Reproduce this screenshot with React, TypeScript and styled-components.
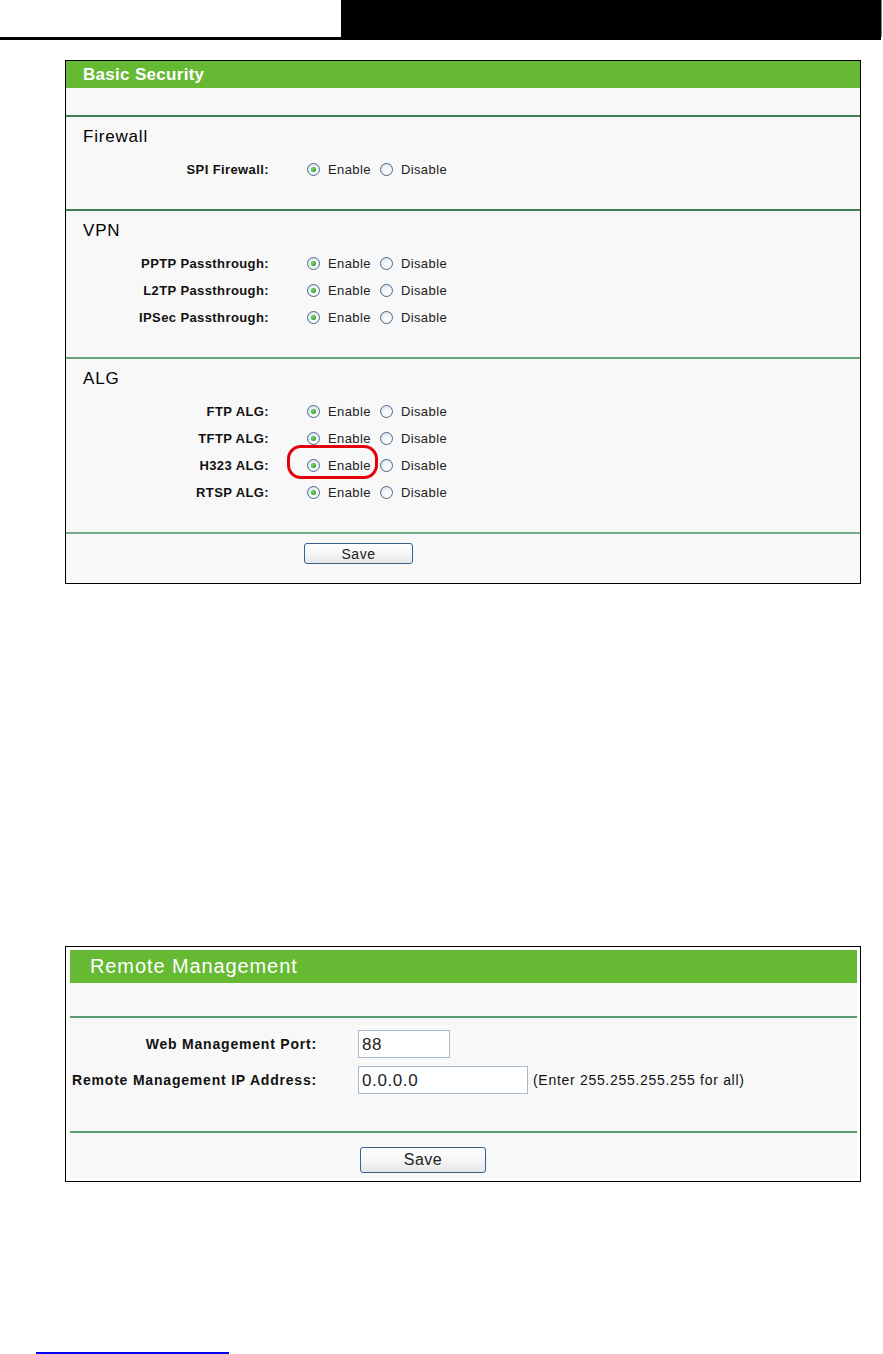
import React from "react";
import styled, { createGlobalStyle } from "styled-components";

const GlobalStyle = createGlobalStyle`
  html, body { margin: 0; padding: 0; background: #ffffff; }
  body { font-family: "Liberation Sans", Arial, sans-serif; color: #000; }
  * { box-sizing: border-box; }
`;

const Page = styled.div`
  width: 883px;
  height: 1354px;
  overflow: hidden;
  display: flex;
  flex-direction: column;
`;

const TopBar = styled.header`
  display: flex;
  height: 40px;
  flex: none;
`;

const TopLeft = styled.div`
  width: 341px;
  height: 40px;
  border-bottom: 3px solid #000;
  background: #fff;
`;

const TopRight = styled.div`
  width: 540px;
  height: 40px;
  background: #000;
`;

const TopEdge = styled.div`
  width: 1px;
  height: 37px;
  background: #8a8a8a;
`;

const Panel = styled.section<{ $top: number; $pad?: string }>`
  margin-top: ${(p) => p.$top}px;
  margin-left: 65px;
  width: 796px;
  border: 1px solid #000;
  background: #fff;
  padding: ${(p) => p.$pad ?? "0"};
  flex: none;
`;

const TitleBar = styled.div<{ $h: number; $size: number; $weight: number; $indent: number; $spacing: number }>`
  height: ${(p) => p.$h}px;
  line-height: ${(p) => p.$h}px;
  background: #66b933;
  color: #fff;
  font-size: ${(p) => p.$size}px;
  font-weight: ${(p) => p.$weight};
  letter-spacing: ${(p) => p.$spacing}px;
  padding-left: ${(p) => p.$indent}px;
  white-space: nowrap;
`;

const Body = styled.div`
  background: #f8f8f8;
`;

const Spacer = styled.div<{ $h: number }>`
  height: ${(p) => p.$h}px;
`;

const Divider = styled.div<{ $color: string }>`
  height: 2px;
  background: ${(p) => p.$color};
`;

const Section = styled.div`
  padding: 8px 0 26px 0;
`;

const SectionHeading = styled.h3`
  margin: 0 0 7px 0;
  padding-left: 17px;
  font-size: 17px;
  line-height: 24px;
  font-weight: normal;
  letter-spacing: 0.8px;
  color: #000;
`;

const OptionRow = styled.div`
  display: grid;
  grid-template-columns: 203px 1fr;
  column-gap: 38px;
  height: 27px;
  align-items: center;
`;

const RowLabel = styled.span`
  text-align: right;
  font-size: 13px;
  font-weight: bold;
  letter-spacing: 0.4px;
  color: #111;
  white-space: nowrap;
`;

const RadioGroup = styled.div`
  position: relative;
  display: flex;
  align-items: center;
  height: 27px;
`;

const Option = styled.label`
  display: flex;
  align-items: center;
  gap: 8px;
  margin-right: 9px;
  font-size: 13px;
  letter-spacing: 0.4px;
  color: #222;
  white-space: nowrap;
`;

const Radio = styled.span<{ $checked?: boolean }>`
  position: relative;
  flex: none;
  width: 13px;
  height: 13px;
  border-radius: 50%;
  border: 1px solid #46698a;
  background: radial-gradient(circle at 62% 68%, #ffffff 0%, #f3f4f6 45%, #cfd6de 100%);
  &::after {
    content: "";
    position: absolute;
    left: 3px;
    top: 3px;
    width: 5px;
    height: 5px;
    border-radius: 50%;
    background: radial-gradient(circle at 40% 40%, #7fdc6f 0%, #2c9a2e 70%);
    display: ${(p) => (p.$checked ? "block" : "none")};
  }
`;

const Highlight = styled.span`
  position: absolute;
  left: -20px;
  top: -7px;
  width: 91px;
  height: 34px;
  border: 3px solid #e3000b;
  border-radius: 14px;
  pointer-events: none;
`;

const Footer = styled.div<{ $pad: string; $indent: number }>`
  padding: ${(p) => p.$pad};
  padding-left: ${(p) => p.$indent}px;
  display: flex;
`;

const SaveButton = styled.button<{ $w: number; $h: number; $size: number }>`
  width: ${(p) => p.$w}px;
  height: ${(p) => p.$h}px;
  border: 1px solid #35618a;
  border-radius: 3px;
  background: linear-gradient(#ffffff 0%, #f6f6f6 50%, #e6e6e6 100%);
  font-family: "Liberation Sans", Arial, sans-serif;
  font-size: ${(p) => p.$size}px;
  letter-spacing: 0.5px;
  color: #222;
  padding: 0;
  cursor: pointer;
`;

const FieldList = styled.div`
  padding: 12px 0 37px 0;
  display: flex;
  flex-direction: column;
  gap: 8px;
`;

const FieldRow = styled.div`
  display: grid;
  grid-template-columns: 247px 1fr;
  column-gap: 41px;
  height: 28px;
  align-items: center;
`;

const FieldLabel = styled.span`
  text-align: right;
  font-size: 14px;
  font-weight: bold;
  letter-spacing: 0.8px;
  color: #111;
  white-space: nowrap;
`;

const FieldControls = styled.div`
  display: flex;
  align-items: center;
  gap: 5px;
`;

const TextInput = styled.input<{ $w: number }>`
  width: ${(p) => p.$w}px;
  height: 28px;
  border: 1px solid #a6bacd;
  background: #fff;
  padding: 2px 3px 0 3px;
  font-family: "Liberation Sans", Arial, sans-serif;
  font-size: 17px;
  letter-spacing: 0.6px;
  color: #222;
  outline: none;
`;

const Hint = styled.span`
  font-size: 14px;
  letter-spacing: 0.7px;
  color: #111;
  white-space: nowrap;
`;

const FootLink = styled.a`
  display: block;
  margin-top: 170px;
  margin-left: 36px;
  width: 193px;
  height: 2px;
  background: #0000ff;
  flex: none;
`;

type Setting = { label: string; highlight?: boolean };

const sections: { title: string; rows: Setting[] }[] = [
  { title: "Firewall", rows: [{ label: "SPI Firewall:" }] },
  {
    title: "VPN",
    rows: [
      { label: "PPTP Passthrough:" },
      { label: "L2TP Passthrough:" },
      { label: "IPSec Passthrough:" },
    ],
  },
  {
    title: "ALG",
    rows: [
      { label: "FTP ALG:" },
      { label: "TFTP ALG:" },
      { label: "H323 ALG:", highlight: true },
      { label: "RTSP ALG:" },
    ],
  },
];

function EnableRow({ label, highlight }: Setting) {
  return (
    <OptionRow>
      <RowLabel>{label}</RowLabel>
      <RadioGroup>
        <Option>
          <Radio $checked />
          Enable
        </Option>
        <Option>
          <Radio />
          Disable
        </Option>
        {highlight && <Highlight />}
      </RadioGroup>
    </OptionRow>
  );
}

export default function App() {
  return (
    <>
      <GlobalStyle />
      <Page>
        <TopBar>
          <TopLeft />
          <TopRight />
          <TopEdge />
        </TopBar>

        <Panel $top={20}>
          <TitleBar $h={27} $size={17} $weight={700} $indent={17} $spacing={0.3}>
            Basic Security
          </TitleBar>
          <Body>
            <Spacer $h={27} />
            {sections.map((s, i) => (
              <React.Fragment key={s.title}>
                <Divider $color={i < 2 ? "#3e7f55" : "#66a47c"} />
                <Section>
                  <SectionHeading>{s.title}</SectionHeading>
                  {s.rows.map((r) => (
                    <EnableRow key={r.label} {...r} />
                  ))}
                </Section>
              </React.Fragment>
            ))}
            <Divider $color="#72ac88" />
            <Footer $pad="9px 0 19px 0" $indent={238}>
              <SaveButton $w={109} $h={21} $size={14}>
                Save
              </SaveButton>
            </Footer>
          </Body>
        </Panel>

        <Panel $top={362} $pad="3px 3px 3px 4px">
          <TitleBar $h={33} $size={20} $weight={400} $indent={20} $spacing={0.9}>
            Remote Management
          </TitleBar>
          <Body>
            <Spacer $h={33} />
            <Divider $color="#5b9c70" />
            <FieldList>
              <FieldRow>
                <FieldLabel>Web Management Port:</FieldLabel>
                <FieldControls>
                  <TextInput $w={92} readOnly defaultValue="88" />
                </FieldControls>
              </FieldRow>
              <FieldRow>
                <FieldLabel>Remote Management IP Address:</FieldLabel>
                <FieldControls>
                  <TextInput $w={170} readOnly defaultValue="0.0.0.0" />
                  <Hint>(Enter 255.255.255.255 for all)</Hint>
                </FieldControls>
              </FieldRow>
            </FieldList>
            <Divider $color="#5b9c70" />
            <Footer $pad="14px 0 5px 0" $indent={290}>
              <SaveButton $w={126} $h={26} $size={16}>
                Save
              </SaveButton>
            </Footer>
          </Body>
        </Panel>

        <FootLink href="#" aria-label="link" />
      </Page>
    </>
  );
}
